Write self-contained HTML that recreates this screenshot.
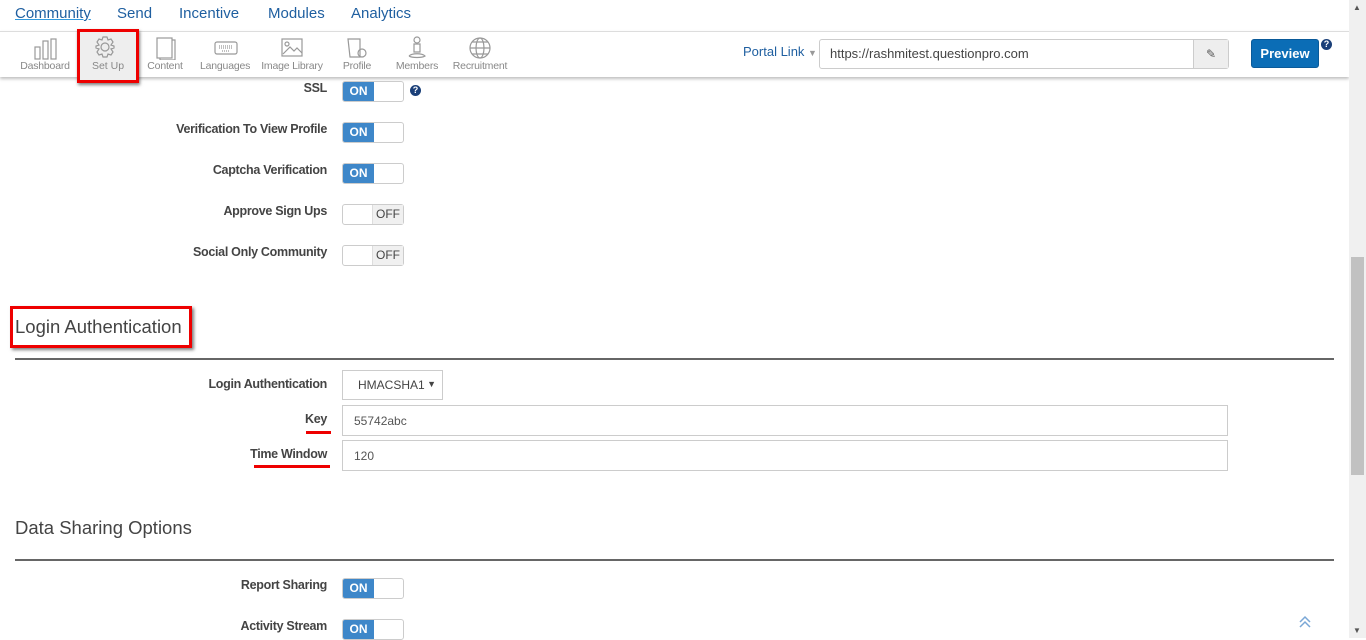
<!DOCTYPE html>
<html><head><style>
*{box-sizing:border-box;margin:0;padding:0}
body{width:1366px;height:638px;overflow:hidden;background:#fff;font-family:"Liberation Sans",sans-serif;position:relative;color:#444}
.a{position:absolute}
.nav a{position:absolute;top:5px;font-size:15px;color:#1f5fa0;text-decoration:none}
.tb{position:absolute;top:31px;left:0;width:1349px;height:46px;background:#fff;border-top:1px solid #ddd;box-shadow:0 2px 3px rgba(0,0,0,.25)}
.it{position:absolute;top:28px;font-size:10.5px;color:#888;text-align:center;letter-spacing:-0.2px}
.ic{position:absolute;top:4px}
.lbl{position:absolute;right:1039px;font-size:12.5px;font-weight:bold;color:#444;white-space:nowrap;letter-spacing:-0.3px}
.tg{position:absolute;left:342px;width:62px;height:21px;border:1px solid #ccc;border-radius:3px;background:#fff;font-size:12px;font-weight:bold}
.tg.on span{position:absolute;left:0;top:0;width:31px;height:19px;background:#3e87c9;color:#fff;line-height:19px;text-align:center;border-radius:2px 0 0 2px}
.tg.off span{position:absolute;right:0;top:0;width:31px;height:19px;background:#f0f0f0;color:#444;line-height:19px;text-align:center;font-weight:normal;border-left:1px solid #ddd}
.h{position:absolute;left:15px;font-size:18.5px;color:#444}
.hr{position:absolute;left:15px;width:1319px;height:2px;background:#666}
.inp{position:absolute;left:342px;width:886px;height:31px;border:1px solid #ccc;font-size:12px;padding:8px 11px;color:#555}
.ul{position:absolute;height:3px;background:#e00}
</style></head><body>
<div class="nav">
<a style="left:15px;text-decoration:underline;text-decoration-color:#3399dd">Community</a>
<a style="left:117px">Send</a><a style="left:179px">Incentive</a><a style="left:268px">Modules</a><a style="left:351px">Analytics</a>
</div>
<div class="tb">
<svg class="ic" style="left:33px" width="26" height="24" fill="none" stroke="#999" stroke-width="1.2"><rect x="2" y="11" width="5" height="12"/><rect x="10" y="5" width="5" height="18"/><rect x="18" y="3" width="5" height="20"/></svg>
<div class="it" style="left:20px;width:50px">Dashboard</div>
<svg class="ic" style="left:155px" width="22" height="24" fill="none" stroke="#999" stroke-width="1.2"><rect x="2" y="2" width="15" height="20"/><path d="M17 4h3v20h-15v-2"/></svg>
<div class="it" style="left:145px;width:40px">Content</div>
<svg class="ic" style="left:213px" width="26" height="24" fill="none" stroke="#999" stroke-width="1.2"><rect x="2" y="6" width="22" height="12" rx="2"/><path d="M6 10h14M6 12h14M9 15h8" stroke-dasharray="1 1"/></svg>
<div class="it" style="left:200px;width:50px">Languages</div>
<svg class="ic" style="left:280px" width="24" height="24" fill="none" stroke="#999" stroke-width="1.2"><rect x="2" y="3" width="20" height="17"/><circle cx="7" cy="8" r="2"/><path d="M3 18l7-7 4 4 3-3 5 5"/></svg>
<div class="it" style="left:259px;width:66px">Image Library</div>
<svg class="ic" style="left:345px" width="24" height="24" fill="none" stroke="#999" stroke-width="1.2"><path d="M3 3h12v18H5z"/><circle cx="17" cy="17" r="4"/></svg>
<div class="it" style="left:337px;width:40px">Profile</div>
<svg class="ic" style="left:405px" width="24" height="24" fill="none" stroke="#999" stroke-width="1.2"><circle cx="12" cy="4" r="3"/><path d="M9 8h6v8h-6zM4 20c3-3 13-3 16 0c-3 2-13 2-16 0"/></svg>
<div class="it" style="left:395px;width:44px">Members</div>
<svg class="ic" style="left:468px" width="26" height="24" fill="none" stroke="#999" stroke-width="1.2"><circle cx="12" cy="12" r="10"/><ellipse cx="12" cy="12" rx="4" ry="10"/><path d="M2 12h20M4 6h16M4 18h16"/></svg>
<div class="it" style="left:450px;width:60px">Recruitment</div>
<div class="a" style="left:743px;top:12px;font-size:13px;color:#1f5fa0">Portal Link <span style="color:#999;font-size:9px">▼</span></div>
<div class="a" style="left:819px;top:7px;width:410px;height:30px;border:1px solid #ccc;border-radius:3px;font-size:13px;padding:6px 10px;color:#444">https://rashmitest.questionpro.com</div>
<div class="a" style="left:1193px;top:8px;width:35px;height:28px;background:#eee;border-left:1px solid #ccc;text-align:center;font-size:12px;line-height:28px;color:#555">✎</div>
<div class="a" style="left:1251px;top:7px;width:68px;height:29px;background:#0b6db6;border:1px solid #0a5a99;border-radius:3px;color:#fff;font-weight:bold;font-size:13px;text-align:center;line-height:27px">Preview</div>
<div class="a" style="left:1321px;top:7px;width:11px;height:11px;border-radius:50%;background:#1a3f78;color:#fff;font-size:9px;font-weight:bold;text-align:center;line-height:11px">?</div>
</div>
<div class="a" style="left:77px;top:29px;width:62px;height:54px;background:#eee;border:3px solid #e00;box-shadow:1px 2px 3px rgba(0,0,0,.5)">
<svg class="a" style="left:13px;top:3px" width="24" height="24" fill="none" stroke="#999" stroke-width="1.2"><circle cx="12" cy="12" r="4"/><path d="M10 2h4l1 3 3-1 2 3-2 3 3 1v2l-3 1 2 3-2 3-3-1-1 3h-4l-1-3-3 1-2-3 2-3-3-1v-2l3-1-2-3 2-3 3 1z"/></svg>
<div class="a" style="left:0;top:28px;width:56px;text-align:center;font-size:10.5px;color:#888">Set Up</div>
</div>
<div class="lbl" style="top:81px">SSL</div><div class="tg on" style="top:81px"><span>ON</span></div>
<div class="a" style="left:410px;top:85px;width:11px;height:11px;border-radius:50%;background:#1a3f78;color:#fff;font-size:9px;font-weight:bold;text-align:center;line-height:11px">?</div>
<div class="lbl" style="top:122px">Verification To View Profile</div><div class="tg on" style="top:122px"><span>ON</span></div>
<div class="lbl" style="top:163px">Captcha Verification</div><div class="tg on" style="top:163px"><span>ON</span></div>
<div class="lbl" style="top:204px">Approve Sign Ups</div><div class="tg off" style="top:204px"><span>OFF</span></div>
<div class="lbl" style="top:245px">Social Only Community</div><div class="tg off" style="top:245px"><span>OFF</span></div>
<div class="a" style="left:10px;top:306px;width:182px;height:42px;border:3px solid #e00;box-shadow:2px 2px 3px rgba(0,0,0,.5)"></div>
<div class="h" style="top:316px">Login Authentication</div>
<div class="hr" style="top:358px"></div>
<div class="lbl" style="top:377px">Login Authentication</div>
<div class="a" style="left:342px;top:370px;width:101px;height:30px;border:1px solid #ccc;font-size:12px;padding:7px 15px;color:#444">HMACSHA1 <span style="position:absolute;right:6px;top:8px;font-size:9px">▼</span></div>
<div class="lbl" style="top:412px">Key</div><div class="ul" style="left:306px;top:431px;width:25px"></div>
<div class="inp" style="top:405px">55742abc</div>
<div class="lbl" style="top:447px">Time Window</div><div class="ul" style="left:254px;top:465px;width:76px"></div>
<div class="inp" style="top:440px">120</div>
<div class="h" style="top:517px">Data Sharing Options</div>
<div class="hr" style="top:559px"></div>
<div class="lbl" style="top:578px">Report Sharing</div><div class="tg on" style="top:578px"><span>ON</span></div>
<div class="lbl" style="top:619px">Activity Stream</div><div class="tg on" style="top:619px"><span>ON</span></div>
<svg class="a" style="left:1298px;top:615px" width="14" height="14" fill="none" stroke="#7aa7d6" stroke-width="1.5"><path d="M2 7l5-5 5 5M2 12l5-5 5 5"/></svg>
<div class="a" style="left:1349px;top:0;width:17px;height:638px;background:#f0f0f0"></div>
<div class="a" style="left:1351px;top:257px;width:13px;height:218px;background:#c1c1c1"></div>
<div class="a" style="left:1353px;top:3px;font-size:8px;color:#555">▲</div>
<div class="a" style="left:1353px;top:626px;font-size:8px;color:#555">▼</div>
</body></html>
